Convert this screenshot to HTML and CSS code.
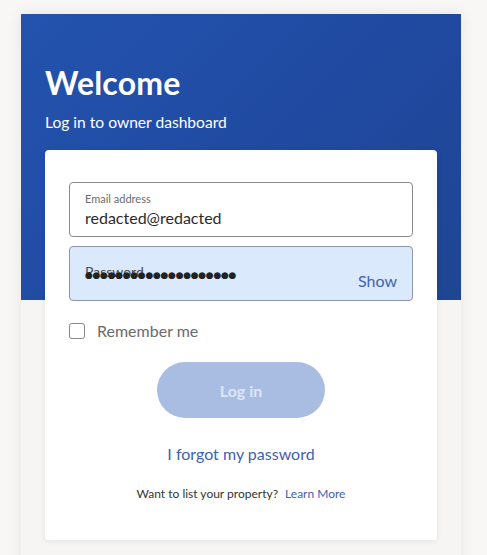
FILE: index.html
```html
<!DOCTYPE html>
<html>
<head>
<meta charset="utf-8">
<link rel="stylesheet" href="styles.css">
</head>
<body>
<div class="panel">
  <div class="hero">
    <h1 class="title">Welcome</h1>
    <p class="subtitle">Log in to owner dashboard</p>
  </div>
  <div class="lower">
    <form class="card">
      <label class="field">
        <span class="label">Email address</span>
        <span class="value">redacted@redacted</span>
      </label>
      <label class="field field-pw">
        <span class="pw-label">Password</span>
        <span class="dots">●●●●●●●●●●●●●●●●●●●●</span>
        <span class="show">Show</span>
      </label>
      <label class="remember">
        <span class="box"></span>
        <span class="remember-text">Remember me</span>
      </label>
      <div class="btn-row"><span class="btn">Log in</span></div>
      <a class="forgot">I forgot my password</a>
      <p class="list">Want to list your property? <a class="learn">Learn More</a></p>
    </form>
  </div>
</div>
</body>
</html>
```
FILE: styles.css
```css
* { box-sizing: border-box; }
html, body { margin: 0; padding: 0; }
body {
  background: #f8f7f5;
  font-family: "Lato", "Open Sans", sans-serif;
  height: 555px;
  overflow: hidden;
}
.panel {
  margin: 14px 0 0 21px;
  width: 440px;
  height: 560px;
  background: #f6f5f3;
  box-shadow: 0 0 14px rgba(0,0,0,0.08);
  position: relative;
}
.hero {
  height: 286px;
  background: linear-gradient(135deg, #2353ae 0%, #2049a0 60%, #1e4693 100%);
  padding: 50px 24px 0 24px;
  color: #fff;
}
.title {
  margin: 0;
  font-size: 32px;
  font-weight: 700;
  line-height: 38px;
  letter-spacing: 0.2px;
}
.subtitle {
  margin: 10px 0 0 0;
  font-size: 15.6px;
  line-height: 20px;
}
.lower {
  position: absolute;
  left: 24px;
  top: 136px;
  width: 392px;
}
.card {
  background: #fff;
  border-radius: 4px;
  box-shadow: 0 1px 6px rgba(0,0,0,0.08);
  padding: 32px 24px 38px 24px;
  display: flex;
  flex-direction: column;
  height: 390px;
}
.field {
  display: flex;
  flex-direction: column;
  height: 55px;
  border: 1px solid #8a8a8a;
  border-radius: 4px;
  padding: 9px 15px 0 15px;
  position: relative;
}
.label {
  font-size: 11px;
  color: #6b6b6b;
  line-height: 14px;
}
.value {
  font-size: 16px;
  color: #2b2b2b;
  line-height: 20px;
  margin-top: 2px;
}
.field-pw {
  margin-top: 9px;
  background: #dbe9fd;
  border-color: #8e96a6;
  padding-top: 19px;
}
.pw-label {
  position: absolute;
  left: 15px;
  top: 16px;
  font-size: 14px;
  color: #4a4a4a;
  line-height: 18px;
}
.dots {
  position: absolute;
  left: 15px;
  top: 22px;
  font-size: 9px;
  letter-spacing: -0.3px;
  color: #222;
  line-height: 12px;
  font-family: "DejaVu Sans", sans-serif;
}
.show {
  position: absolute;
  right: 15px;
  top: 24px;
  font-size: 16px;
  color: #3f62b0;
  line-height: 20px;
}
.remember {
  display: flex;
  align-items: center;
  gap: 12px;
  margin-top: 20px;
}
.box {
  width: 16px;
  height: 16px;
  border: 1px solid #888;
  border-radius: 3px;
  background: #fff;
}
.remember-text {
  font-size: 16px;
  color: #6b6b6b;
}
.btn-row {
  display: flex;
  justify-content: center;
  margin-top: 22px;
}
.btn {
  width: 168px;
  height: 56px;
  border-radius: 28px;
  background: #a9bde3;
  color: #dde6f6;
  font-weight: 700;
  font-size: 16px;
  display: flex;
  align-items: center;
  justify-content: center;
}
.forgot {
  margin-top: 26px;
  text-align: center;
  font-size: 16px;
  color: #3f5fb5;
  line-height: 20px;
}
.list {
  margin: 22px 0 0 0;
  text-align: center;
  font-size: 12px;
  color: #333;
}
.learn {
  color: #3f5fb5;
  margin-left: 4px;
}
```
